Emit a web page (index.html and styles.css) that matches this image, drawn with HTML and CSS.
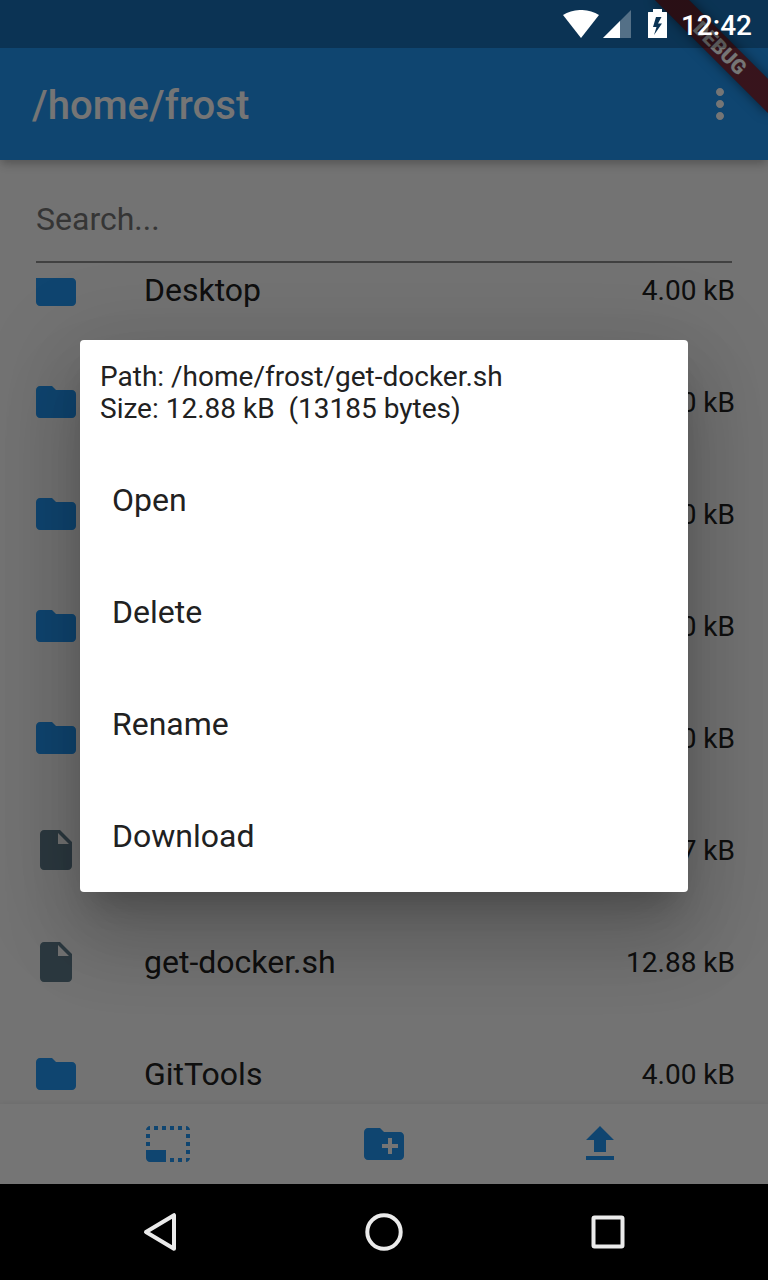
FILE: index.html
```html
<!DOCTYPE html>
<html lang="en">
<head>
<meta charset="utf-8">
<title>/home/frost</title>
<link rel="stylesheet" href="styles.css">
</head>
<body>
<svg class="defs" width="0" height="0">
  <symbol id="folder" viewBox="0 0 24 24"><path d="M10 4H4c-1.1 0-1.99.9-1.99 2L2 18c0 1.1.9 2 2 2h16c1.1 0 2-.9 2-2V8c0-1.1-.9-2-2-2h-8l-2-2z"/></symbol>
  <symbol id="file" viewBox="0 0 24 24"><path d="M6 2c-1.1 0-1.99.9-1.99 2L4 20c0 1.1.89 2 1.99 2H18c1.1 0 2-.9 2-2V8l-6-6H6zm7 7V3.500L18.500 9H13z"/></symbol>
</svg>
<div class="screen">
  <div class="app">
    <header class="appbar">
      <div class="toolbar">
        <h1 class="title">/home/frost</h1>
        <svg class="icon more" viewBox="0 0 24 24"><path d="M12 8c1.1 0 2-.9 2-2s-.9-2-2-2-2 .9-2 2 .9 2 2 2zm0 2c-1.100 0-2 .9-2 2s.9 2 2 2 2-.9 2-2-.9-2-2-2zm0 6c-1.100 0-2 .9-2 2s.9 2 2 2 2-.9 2-2-.9-2-2-2z"/></svg>
      </div>
    </header>
    <div class="search"><div class="field">Search...</div></div>
    <main class="list">
      <div class="row"><svg class="icon blue"><use href="#folder"/></svg><span class="name">Desktop</span><span class="size">4.00 kB</span></div>
      <div class="row"><svg class="icon blue"><use href="#folder"/></svg><span class="name"></span><span class="size">4.00 kB</span></div>
      <div class="row"><svg class="icon blue"><use href="#folder"/></svg><span class="name"></span><span class="size">4.00 kB</span></div>
      <div class="row"><svg class="icon blue"><use href="#folder"/></svg><span class="name"></span><span class="size">4.00 kB</span></div>
      <div class="row"><svg class="icon blue"><use href="#folder"/></svg><span class="name"></span><span class="size">4.00 kB</span></div>
      <div class="row"><svg class="icon slate"><use href="#file"/></svg><span class="name"></span><span class="size">3.97 kB</span></div>
      <div class="row"><svg class="icon slate"><use href="#file"/></svg><span class="name">get-docker.sh</span><span class="size">12.88 kB</span></div>
      <div class="row"><svg class="icon blue"><use href="#folder"/></svg><span class="name">GitTools</span><span class="size">4.00 kB</span></div>
    </main>
    <footer class="actions">
      <svg class="icon blue" viewBox="0 0 24 24"><path d="M23 15h-2v2h2v-2zm0-4h-2v2h2v-2zm0 8h-2v2c1 0 2-1 2-2zM15 3h-2v2h2V3zm8 4h-2v2h2V7zm-2-4v2h2c0-1-1-2-2-2zM3 21h8v-6H1v4c0 1.100.9 2 2 2zM3 7H1v2h2V7zm12 12h-2v2h2v-2zm4-16h-2v2h2V3zm0 16h-2v2h2v-2zM3 3C2 3 1 4 1 5h2V3zm0 8H1v2h2v-2zm8-8H9v2h2V3zM7 3H5v2h2V3z"/></svg>
      <svg class="icon blue" viewBox="0 0 24 24"><path d="M20 6h-8l-2-2H4c-1.110 0-1.990.89-1.990 2L2 18c0 1.110.89 2 2 2h16c1.110 0 2-.89 2-2V8c0-1.110-.89-2-2-2zm-1 8h-3v3h-2v-3h-3v-2h3V9h2v3h3v2z"/></svg>
      <svg class="icon blue" viewBox="0 0 24 24"><path d="M9 16h6v-6h4l-7-7-7 7h4zm-4 2h14v2H5z"/></svg>
    </footer>
    <div class="ribbon">DEBUG</div>
    <div class="scrim"></div>
  </div>
  <nav class="navbar">
    <svg viewBox="0 0 48 48"><path d="M38 7.200V40.800L10 24z"/></svg>
    <svg viewBox="0 0 48 48"><circle cx="24" cy="24" r="16.700"/></svg>
    <svg viewBox="0 0 48 48"><rect x="9.500" y="9.500" width="29" height="29" rx="1"/></svg>
  </nav>
  <div class="status">
    <svg class="wifi" viewBox="0 0 36 28"><path d="M0 5C10-1.700 26-1.700 36 5L18 28z"/></svg>
    <svg class="signal" viewBox="0 0 28 28"><path class="faint" d="M28 0V28H0z"/><path d="M17 11V28H0z"/></svg>
    <svg class="battery" viewBox="0 0 19 29"><path fill-rule="evenodd" d="M5 0h9v3h4.500Q19 3 19 3.500V28.500Q19 29 18.500 29h-18Q0 29 0 28.500v-25Q0 3 .5 3H5zM8 8L5 18h3.500L6 26 14 14.500h-4L13.500 8z"/></svg>
    <span class="clock">12:42</span>
  </div>
  <div class="dialog">
    <div class="info">Path: /home/frost/get-docker.sh<br>Size: 12.88 kB&nbsp; (13185 bytes)</div>
    <div class="option">Open</div>
    <div class="option">Delete</div>
    <div class="option">Rename</div>
    <div class="option">Download</div>
  </div>
</div>
</body>
</html>
```
FILE: styles.css
```css
* { box-sizing: border-box; }
body { margin: 0; font-family: Roboto, sans-serif; background: #000; }
svg { display: block; flex: none; }
.defs { position: absolute; }
.screen { position: relative; width: 768px; height: 1280px; overflow: hidden; display: flex; flex-direction: column; }
.app { position: relative; height: 1184px; display: flex; flex-direction: column; background: #fafafa; overflow: hidden; }
.appbar { height: 160px; padding-top: 48px; background: #2196f3; flex: none;
  box-shadow: 0 4px 8px -2px rgba(0,0,0,.16), 0 6px 9px rgba(0,0,0,.08), 0 2px 14px rgba(0,0,0,.08); }
.toolbar { height: 112px; display: flex; align-items: center; justify-content: space-between; padding: 2px 24px 0 32px; }
.title { margin: 0; padding-top: 2px; font-size: 40px; font-weight: 500; line-height: 48px; letter-spacing: .05px; color: #fff; }
.icon { width: 48px; height: 48px; }
.more { fill: #fff; margin-top: -2px; }
.blue { fill: #2196f3; }
.slate { fill: #607d8b; }
.search { flex: none; height: 118px; padding: 16px 36px 15px; }
.field { height: 87px; line-height: 86px; border-bottom: 2px solid #8f8f8f; font-size: 32px; color: #757575; }
.list { height: 826px; flex: none; overflow: hidden; display: flex; flex-direction: column; }
.row { height: 112px; flex: none; display: flex; align-items: center; padding: 0 33px 0 32px; color: #212121; }
.row:first-child { margin-top: -44px; }
.name { flex: 1; margin-left: 64px; font-size: 32px; line-height: 38px; }
.size { padding-top: 2px; font-size: 28px; line-height: 34px; }
.actions { position: relative; height: 80px; flex: none; display: flex; align-items: center; justify-content: center; gap: 168px; background: #fff; box-shadow: 0 0 5px rgba(0,0,0,.08); }
.ribbon { position: absolute; left: 640px; top: 36px; width: 160px; height: 24px; transform: rotate(45deg); background: linear-gradient(rgba(183,28,28,.63), rgba(183,28,28,.63)), #104878; box-shadow: 0 0 12px rgba(0,0,0,.5); color: #fff; font-size: 20.400px; font-weight: 900; line-height: 24px; text-align: center; }
.scrim { position: absolute; inset: 0; background: rgba(0,0,0,.54); }
.navbar { height: 96px; display: flex; align-items: center; justify-content: center; gap: 176px; background: #000; }
.navbar svg { width: 48px; height: 48px; fill: none; stroke: #ebebeb; stroke-width: 4; stroke-linejoin: round; }
.status { position: absolute; top: 0; left: 0; width: 768px; height: 48px; padding: 0 16px; display: flex; justify-content: flex-end; align-items: flex-start; background: rgba(0,0,0,.25); fill: #fff; color: #fff; }
.wifi { width: 36px; height: 28px; margin: 10px 4px 0 0; }
.signal { width: 28px; height: 28px; margin: 10px 17px 0 0; }
.faint { fill-opacity: .3; }
.battery { width: 19px; height: 29px; margin: 9px 14px 0 0; }
.clock { font-size: 28px; font-weight: 500; line-height: 52px; }
.dialog { position: absolute; left: 80px; top: 340px; width: 608px; height: 552px; border-radius: 4px; background: #fff; color: #212121;
  box-shadow: 0 22px 30px -14px rgba(0,0,0,.2), 0 48px 76px 6px rgba(0,0,0,.14), 0 18px 92px 16px rgba(0,0,0,.12); }
.info { height: 104px; padding: 21px 20px 0; font-size: 28px; line-height: 32px; }
.option { height: 112px; line-height: 112px; padding-left: 32px; font-size: 32px; }
```
